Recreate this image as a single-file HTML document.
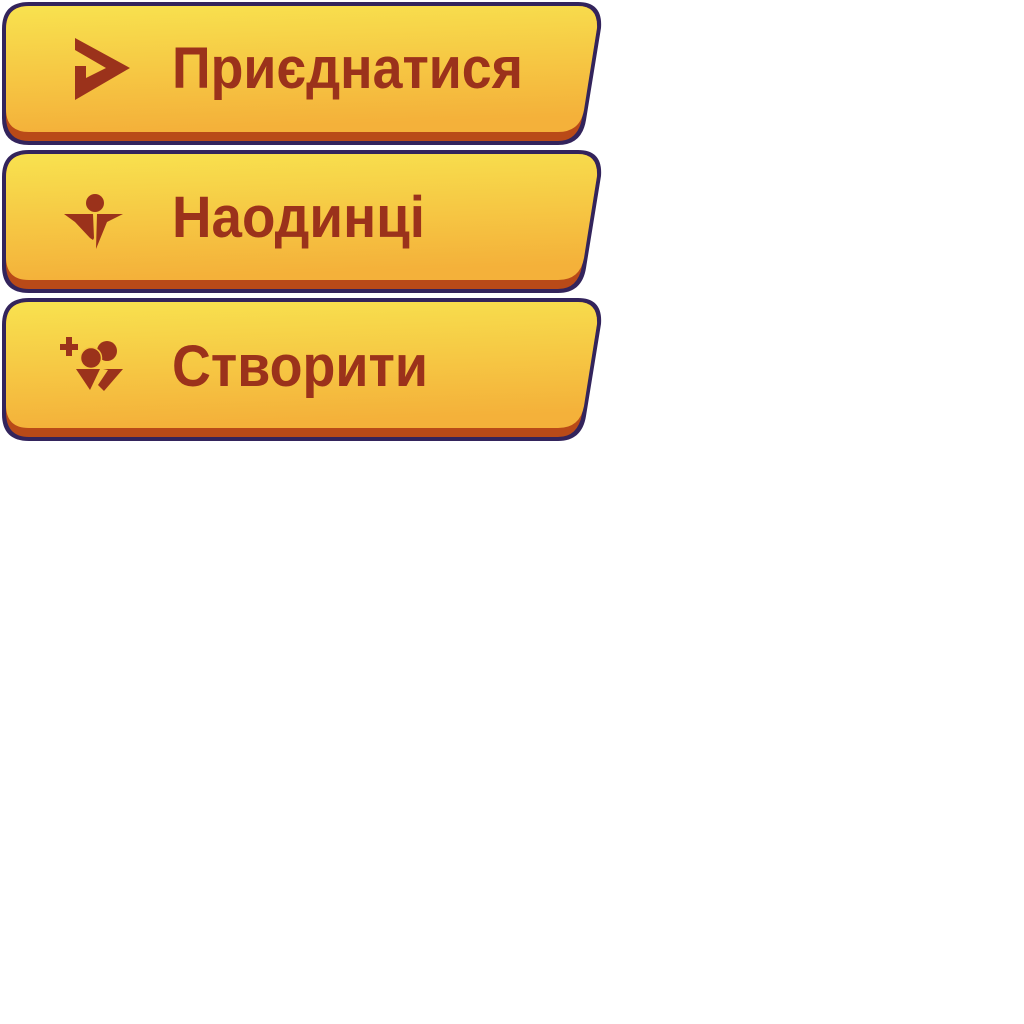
<!DOCTYPE html>
<html><head><meta charset="utf-8"><style>
html,body{margin:0;padding:0;background:#fff;width:1024px;height:1024px;overflow:hidden}
svg{position:absolute;left:0;top:0}
text{font-family:"Liberation Sans",sans-serif;font-weight:bold;font-size:58px;fill:#9b321b}
</style></head><body>
<svg width="1024" height="1024" viewBox="0 0 1024 1024">
<defs>
<linearGradient id="g" x1="0" y1="0" x2="0.15" y2="1">
<stop offset="0" stop-color="#f8e24f"/><stop offset="1" stop-color="#f4b13a"/>
</linearGradient>
<g id="btn">
<path d="M27,0 H576 Q601,0 599,26 L584,118 Q580,143 556,143 H27 Q0,143 0,116 V27 Q0,0 27,0 Z" fill="#33245c"/>
<path d="M27,4 H576 Q596,4 595,26 L580,116 Q576,139 556,139 H27 Q4,139 4,114 V27 Q4,4 27,4 Z" fill="#b94a18"/>
<path d="M27,4 H576 Q596,4 595,26 L582,108 Q578,130 556,130 H27 Q4,130 4,107 V27 Q4,4 27,4 Z" fill="url(#g)"/>
</g>
</defs>
<use href="#btn" x="2" y="2"/>
<use href="#btn" x="2" y="150"/>
<use href="#btn" x="2" y="298"/>
<g fill="#9b321b">
<polygon points="75,38 130,68 75,100 75,66 86,66 86,78 106,68 75,50"/>
<circle cx="95" cy="203" r="9"/>
<polygon points="64,214 93,214 94,238 93,240 90,238 75,222"/>
<polygon points="97,214 123,214 107,222 96,249"/>
<rect x="60" y="344" width="18" height="6"/><rect x="66" y="337" width="6" height="19"/>
<circle cx="107" cy="351" r="10"/>
<circle cx="91" cy="358" r="10.5" stroke="#f6c440" stroke-width="1.5"/>
<polygon points="76,369 100,369 90,390"/>
<polygon points="103,369 123,369 104,391 98,385 108,370"/>
<text x="172" y="88" textLength="351" lengthAdjust="spacingAndGlyphs">Приєднатися</text>
<text x="172" y="237" textLength="253" lengthAdjust="spacingAndGlyphs">Наодинці</text>
<text x="172" y="386" textLength="256" lengthAdjust="spacingAndGlyphs">Створити</text>
</g>
</svg>
</body></html>
